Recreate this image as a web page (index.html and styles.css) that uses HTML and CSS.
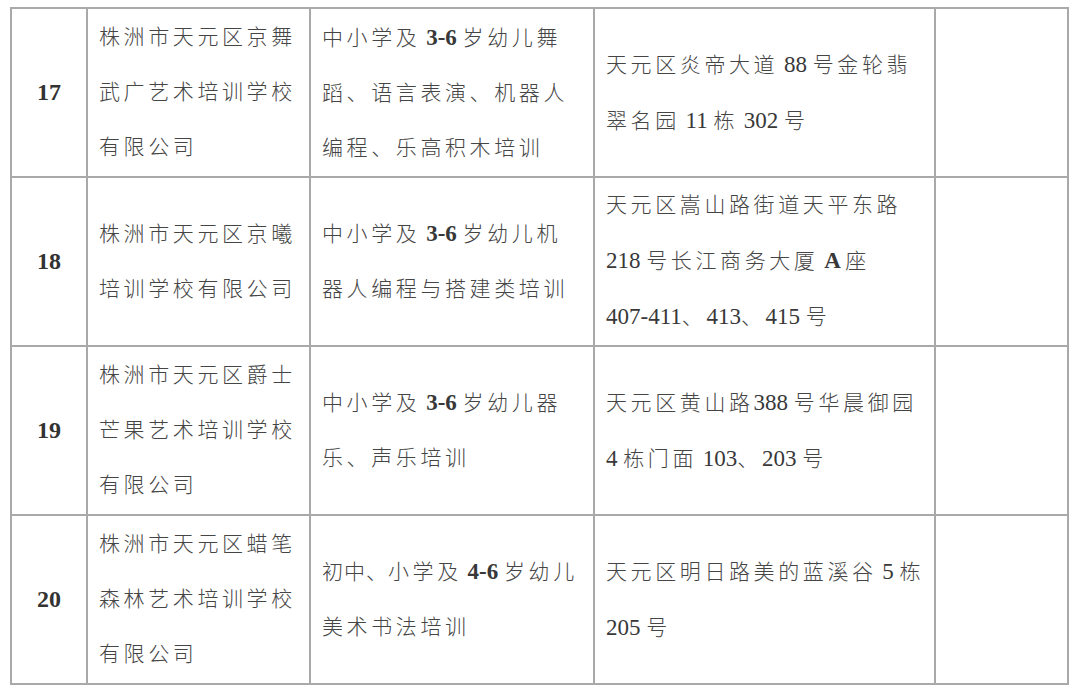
FILE: index.html
```html
<!DOCTYPE html>
<html lang="zh-CN">
<head>
<meta charset="utf-8">
<link rel="stylesheet" href="styles.css">
</head>
<body>
<table class="list">
  <colgroup>
    <col class="c1"><col class="c2"><col class="c3"><col class="c4"><col class="c5">
  </colgroup>
  <tr>
    <td class="no">17</td>
    <td>株洲市天元区京舞<br>武广艺术培训学校<br>有限公司</td>
    <td>中小学及<b class="n"> 3-6 </b>岁幼儿舞<br>蹈、语言表演、机器人<br>编程、乐高积木培训</td>
    <td>天元区炎帝大道<span class="n"> 88 </span>号金轮翡<br>翠名园<span class="n"> 11 </span>栋<span class="n"> 302 </span>号</td>
    <td></td>
  </tr>
  <tr>
    <td class="no">18</td>
    <td>株洲市天元区京曦<br>培训学校有限公司</td>
    <td>中小学及<b class="n"> 3-6 </b>岁幼儿机<br>器人编程与搭建类培训</td>
    <td>天元区嵩山路街道天平东路<br><span class="n">218 </span>号长江商务大厦<span class="n b"> A </span>座<br><span class="n">407-411</span>、<span class="n">413</span>、<span class="n">415 </span>号</td>
    <td></td>
  </tr>
  <tr>
    <td class="no">19</td>
    <td>株洲市天元区爵士<br>芒果艺术培训学校<br>有限公司</td>
    <td>中小学及<b class="n"> 3-6 </b>岁幼儿器<br>乐、声乐培训</td>
    <td>天元区黄山路<span class="n">388 </span>号华晨御园<br><span class="n">4 </span>栋门面<span class="n"> 103</span>、<span class="n">203 </span>号</td>
    <td></td>
  </tr>
  <tr>
    <td class="no">20</td>
    <td>株洲市天元区蜡笔<br>森林艺术培训学校<br>有限公司</td>
    <td><span class="tight">初中、</span>小学及<b class="n"> 4-6 </b>岁幼儿<br>美术书法培训</td>
    <td>天元区明日路美的蓝溪谷<span class="n"> 5 </span>栋<br><span class="n">205 </span>号</td>
    <td></td>
  </tr>
</table>
</body>
</html>
```

FILE: styles.css
```css
html, body {
  margin: 0;
  padding: 0;
  background: #ffffff;
}
body {
  padding: 7px 0 0 10px;
}
.list {
  border-collapse: collapse;
  table-layout: fixed;
  width: 1057px;
  font-family: "Liberation Serif", "Noto Sans CJK SC", serif;
  color: #454545;
  font-size: 21px;
  font-weight: 300;
}
.c1 { width: 76px; }
.c2 { width: 223px; }
.c3 { width: 284px; }
.c4 { width: 341px; }
.c5 { width: 133px; }
.list tr { height: 169px; }
.list td {
  border: 2px solid #a9a9a9;
  padding: 0 8px 0 11px;
  line-height: 55px;
  letter-spacing: 3.6px;
  vertical-align: middle;
  white-space: nowrap;
  overflow: hidden;
}
.list td.no {
  text-align: center;
  padding: 0;
  font-weight: 700;
  font-size: 24px;
  letter-spacing: 0;
  color: #333;
}
.n {
  font-family: "Liberation Serif", serif;
  font-size: 23px;
  letter-spacing: 0;
  font-weight: 400;
  color: #383838;
}
b.n, .b { font-weight: 700; }
.tight { letter-spacing: 1px; }
```
